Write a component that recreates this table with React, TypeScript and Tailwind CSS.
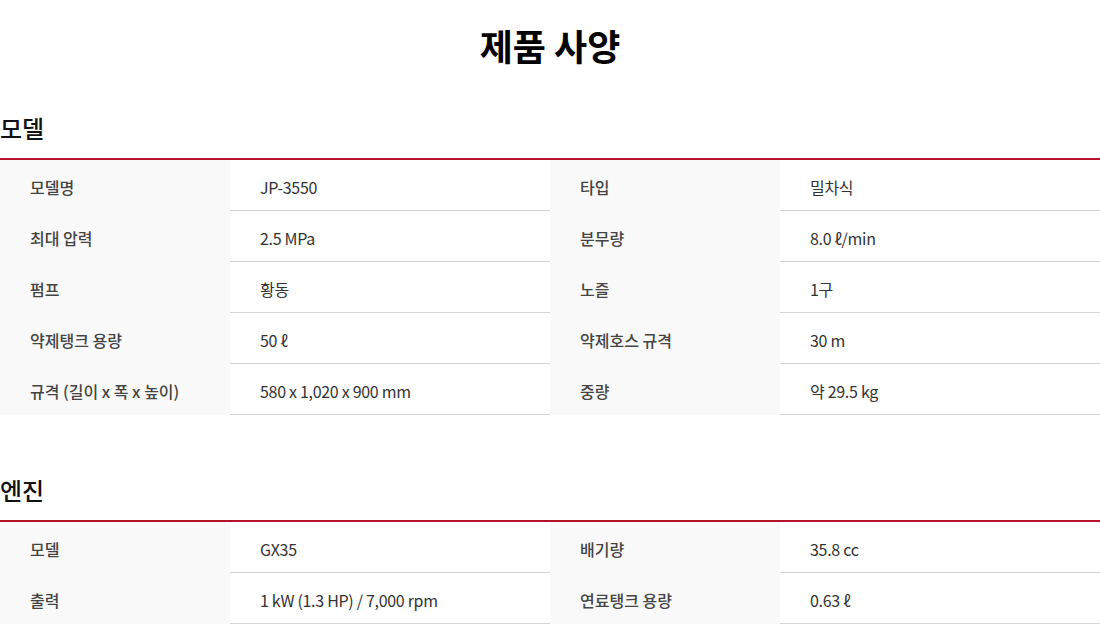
import React from "react";

type Spec = [string, string, string, string];

const modelSpecs: Spec[] = [
  ["모델명", "JP-3550", "타입", "밀차식"],
  ["최대 압력", "2.5 MPa", "분무량", "8.0 ℓ/min"],
  ["펌프", "황동", "노즐", "1구"],
  ["약제탱크 용량", "50 ℓ", "약제호스 규격", "30 m"],
  ["규격 (길이 x 폭 x 높이)", "580 x 1,020 x 900 mm", "중량", "약 29.5 kg"],
];

const engineSpecs: Spec[] = [
  ["모델", "GX35", "배기량", "35.8 cc"],
  ["출력", "1 kW (1.3 HP) / 7,000 rpm", "연료탱크 용량", "0.63 ℓ"],
];

const SpecTable = ({ title, rows }: { title: string; rows: Spec[] }) => (
  <section>
    <h2 className="text-[24px] leading-[36px] font-medium text-[#111] mb-[12px]">{title}</h2>
    <div className="border-t-2 border-[#b8102a]">
      {rows.map((row, i) => (
        <div
          key={i}
          className="grid grid-cols-[230px_320px_230px_320px] border-b border-[#d4d4d4] text-[16px] leading-[48px] h-[51px]"
        >
          <div className="bg-[#f9f9f9] pl-[30px] pt-[3px] font-medium text-[#444]">{row[0]}</div>
          <div className="pl-[30px] pt-[3px] tracking-[-0.3px] text-[#333]">{row[1]}</div>
          <div className="bg-[#f9f9f9] pl-[30px] pt-[3px] font-medium text-[#444]">{row[2]}</div>
          <div className="pl-[30px] pt-[3px] tracking-[-0.3px] text-[#333]">{row[3]}</div>
        </div>
      ))}
    </div>
  </section>
);

export default function App() {
  return (
    <div
      className="w-[1100px] bg-white"
      style={{ fontFamily: '"Noto Sans CJK KR", "Noto Sans", sans-serif' }}
    >
      <h1 className="pt-[18px] text-center text-[36px] leading-[54px] font-bold text-black">제품 사양</h1>
      <div className="mt-[38px] flex flex-col gap-[57px]">
        <SpecTable title="모델" rows={modelSpecs} />
        <SpecTable title="엔진" rows={engineSpecs} />
      </div>
    </div>
  );
}
